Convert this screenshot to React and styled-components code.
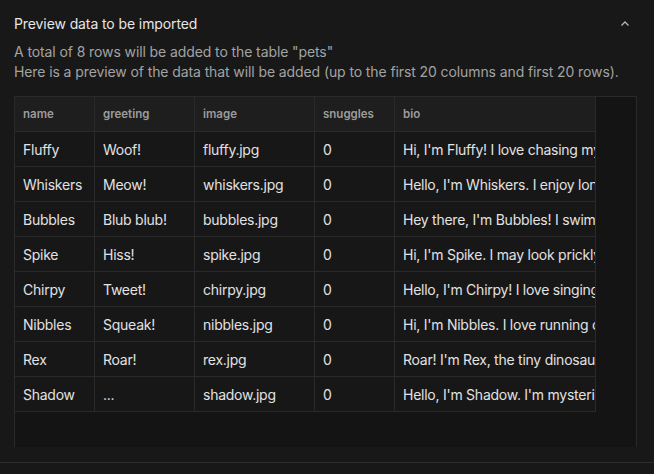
import React from "react";
import styled, { createGlobalStyle } from "styled-components";

const GlobalStyle = createGlobalStyle`
  html, body {
    margin: 0;
    padding: 0;
    background: #181818;
  }
  body {
    font-family: Inter, "Noto Sans", sans-serif;
    color: #e4e4e4;
  }
`;

const Page = styled.div`
  width: 654px;
  height: 474px;
  background: #181818;
  display: flex;
  flex-direction: column;
  overflow: hidden;
`;

const Section = styled.div`
  padding: 0 17px 0 14px;
  height: 462px;
  display: flex;
  flex-direction: column;
  border-bottom: 1px solid #2c2c2c;
`;

const Header = styled.div`
  height: 46px;
  display: flex;
  align-items: center;
  justify-content: space-between;
`;

const Title = styled.div`
  font-size: 14px;
  color: #e6e6e6;
  letter-spacing: -0.1px;
`;

const Chevron = styled.svg`
  width: 12px;
  height: 12px;
  margin-right: 6px;
  margin-top: 1px;
  color: #b5b5b5;
`;

const Desc = styled.div`
  font-size: 14px;
  line-height: 20px;
  color: #a3a3a3;
  letter-spacing: -0.1px;
  margin-top: -4px;
`;

const GridBox = styled.div`
  margin-top: 14px;
  height: 350px;
  background: #141414;
  border-left: 1px solid #2a2a2a;
  border-right: 1px solid #2a2a2a;
  border-top: 1px solid #2a2a2a;
  overflow: hidden;
`;

const Table = styled.div`
  display: grid;
  grid-template-columns: 80px 100px 120px 80px 201px;
  width: 581px;
`;

const HeadCell = styled.div`
  height: 34px;
  display: flex;
  align-items: center;
  padding: 0 8px;
  font-size: 11.5px;
  font-weight: 600;
  color: #9c9c9c;
  background: #1e1e1e;
  border-right: 1px solid #2a2a2a;
  border-bottom: 1px solid #2a2a2a;
  white-space: nowrap;
  overflow: hidden;
`;

const Cell = styled.div`
  height: 34px;
  display: flex;
  align-items: center;
  padding: 0 8px;
  font-size: 14px;
  color: #e2e2e2;
  background: #171717;
  border-right: 1px solid #2a2a2a;
  border-bottom: 1px solid #2a2a2a;
  white-space: nowrap;
  overflow: hidden;
  letter-spacing: -0.25px;
`;

const columns = ["name", "greeting", "image", "snuggles", "bio"];

const rows = [
  ["Fluffy", "Woof!", "fluffy.jpg", "0", "Hi, I'm Fluffy! I love chasing my tail."],
  ["Whiskers", "Meow!", "whiskers.jpg", "0", "Hello, I'm Whiskers. I enjoy long naps."],
  ["Bubbles", "Blub blub!", "bubbles.jpg", "0", "Hey there, I'm Bubbles! I swim all day."],
  ["Spike", "Hiss!", "spike.jpg", "0", "Hi, I'm Spike. I may look prickly, but I'm sweet."],
  ["Chirpy", "Tweet!", "chirpy.jpg", "0", "Hello, I'm Chirpy! I love singing songs."],
  ["Nibbles", "Squeak!", "nibbles.jpg", "0", "Hi, I'm Nibbles. I love running on my wheel."],
  ["Rex", "Roar!", "rex.jpg", "0", "Roar! I'm Rex, the tiny dinosaur."],
  ["Shadow", "...", "shadow.jpg", "0", "Hello, I'm Shadow. I'm mysterious."],
];

export default function App() {
  return (
    <Page>
      <GlobalStyle />
      <Section>
        <Header>
          <Title>Preview data to be imported</Title>
          <Chevron viewBox="0 0 12 12" fill="none">
            <path d="M2.5 7.5L6 4l3.5 3.5" stroke="currentColor" strokeWidth="1.3" />
          </Chevron>
        </Header>
        <Desc>
          A total of 8 rows will be added to the table "pets"
          <br />
          Here is a preview of the data that will be added (up to the first 20 columns and first 20 rows).
        </Desc>
        <GridBox>
          <Table>
            {columns.map((c) => (
              <HeadCell key={c}>{c}</HeadCell>
            ))}
            {rows.map((r) =>
              r.map((v, i) => <Cell key={r[0] + i}>{v}</Cell>)
            )}
          </Table>
        </GridBox>
      </Section>
    </Page>
  );
}
